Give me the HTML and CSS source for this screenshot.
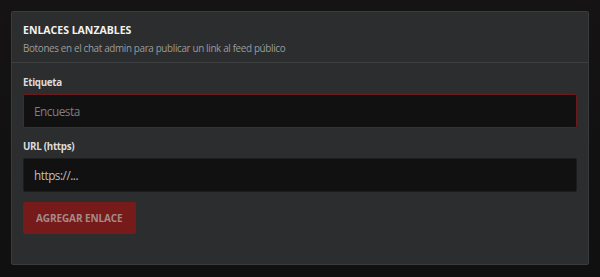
FILE: index.html
```
<!DOCTYPE html>
<html lang="es">
<head>
  <meta charset="UTF-8" />
  <meta name="viewport" content="width=device-width, initial-scale=1.0"/>
  <title>Enlaces lanzables</title>
  <link rel="stylesheet" href="styles.css">
</head>
<body>
  <div class="card">
    <div class="card-header">
      <h3>Enlaces lanzables</h3>
      <p>Botones en el chat admin para publicar un link al feed público</p>
    </div>
    <div class="card-body">
      <label class="field-label" for="linkLabel">Etiqueta</label>
      <input type="text" id="linkLabel" class="field focused" placeholder="Encuesta" />

      <label class="field-label" for="linkUrl">URL (https)</label>
      <input type="text" id="linkUrl" class="field" placeholder="https://..." />

      <button class="add-btn" disabled>Agregar enlace</button>
    </div>
  </div>
</body>
</html>
```

FILE: styles.css
```
body {
  margin: 0;
  padding: 11px;
  background: linear-gradient(to bottom, #151314, #101010);
  font-family: "Open Sans", Arial, sans-serif;
  height: 277px;
  box-sizing: border-box;
}

.card {
  background: #2c2d2e;
  border: 1px solid #3a3b3c;
  border-radius: 2px;
}

.card-header {
  padding: 10px 11px 7px;
  border-bottom: 1px solid #3e3f40;
}

.card-header h3 {
  margin: 0;
  color: #f2f2f2;
  font-size: 10.5px;
  font-weight: bold;
  text-transform: uppercase;
  letter-spacing: 0;
  line-height: 16px;
}

.card-header p {
  margin: 3px 0 0;
  color: #9a9b9c;
  font-size: 9.9px;
  letter-spacing: -0.35px;
  line-height: 14px;
}

.card-body {
  padding: 13px 11px 30px;
  display: flex;
  flex-direction: column;
  align-items: flex-start;
}

.field-label {
  color: #dcdcdc;
  font-size: 9.8px;
  font-weight: bold;
  letter-spacing: -0.3px;
  line-height: 14px;
  margin-bottom: 4px;
}

.field {
  box-sizing: border-box;
  width: 100%;
  height: 34px;
  padding: 0 10px;
  background: #121112;
  border: 1px solid #1d1d1e;
  border-radius: 2px;
  color: #dcdcdc;
  font-family: "Open Sans", Arial, sans-serif;
  font-size: 11.8px;
  letter-spacing: -0.5px;
  outline: none;
  margin-bottom: 12px;
}

.field.focused {
  border-color: #6e1a1c;
}

.field.focused::placeholder {
  color: #7f7f7f;
}

.field::placeholder {
  color: #bdbdbd;
}

.add-btn {
  margin-top: -2px;
  height: 32px;
  padding: 0 13px;
  background: #761a1a;
  border: none;
  border-radius: 2px;
  color: #a58a88;
  font-family: "Open Sans", Arial, sans-serif;
  font-size: 10px;
  font-weight: bold;
  text-transform: uppercase;
  letter-spacing: -0.1px;
}
```
